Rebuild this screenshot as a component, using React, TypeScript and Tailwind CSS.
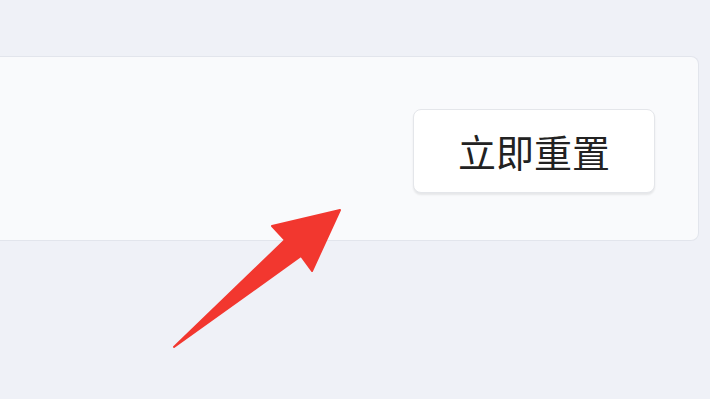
export default function App() {
  return (
    <div className="relative h-[399px] w-[710px] overflow-hidden bg-[#eff1f7] pt-[56px] font-['Noto_Sans_CJK_SC',sans-serif]">
      <div className="mr-[11px] flex h-[185px] items-center justify-end rounded-r-[8px] border border-l-0 border-[#e2e5ec] bg-[#f9fafc] pr-[43px]">
        <button className="mt-[4px] flex h-[84px] w-[242px] items-center justify-center rounded-[8px] border border-[#e4e6ea] bg-white text-[38px] leading-none text-[#222222] shadow-[0_2px_2px_rgba(0,0,0,0.08)]">
          立即重置
        </button>
      </div>

      <svg className="absolute left-0 top-0" width="710" height="399" viewBox="0 0 710 399">
        <polygon
          points="174,347 285,240 272,226 340,210 312,271 301,256"
          fill="#f2372f"
          stroke="#f2372f"
          strokeWidth="2"
          strokeLinejoin="round"
        />
      </svg>
    </div>
  );
}
